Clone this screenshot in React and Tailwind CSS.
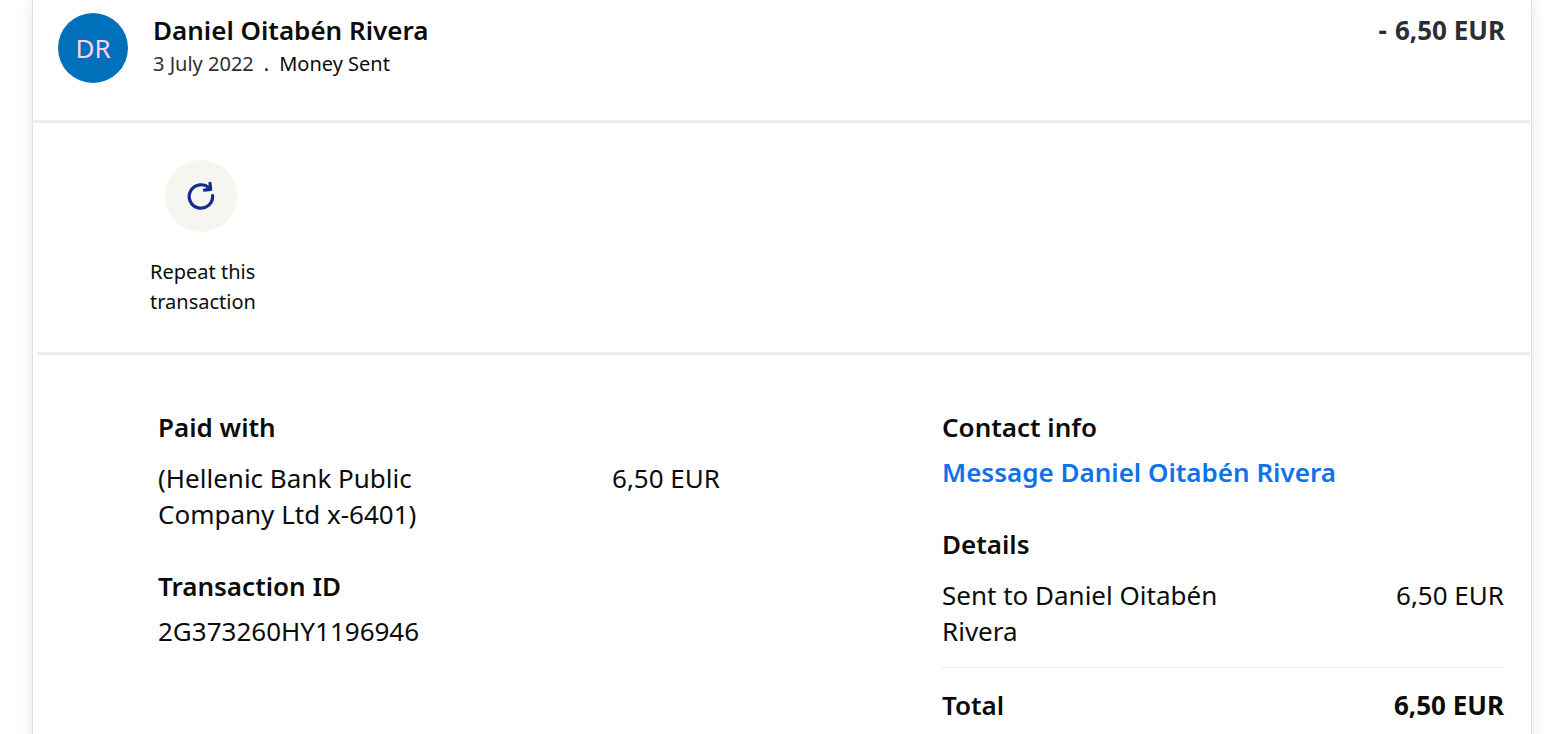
const payment = {
  name: 'Daniel Oitabén Rivera',
  initials: 'DR',
  date: '3 July 2022',
  type: 'Money Sent',
  amount: '6,50 EUR',
  source: '(Hellenic Bank Public Company Ltd x-6401)',
  id: '2G373260HY1196946',
}

function RepeatIcon() {
  return (
    <svg
      viewBox="0 0 32 32"
      className="size-8"
      fill="none"
      stroke="#142c8e"
      strokeWidth="3.2"
      strokeLinecap="round"
      strokeLinejoin="round"
      aria-hidden="true"
    >
      <path d="M27.6 15.6A11.7 11.7 0 1 1 24.6 8.6" />
      <path d="M25 3.3L25.6 9.4L19.4 10.2" />
    </svg>
  )
}

function Row({ label, amount }) {
  return (
    <div className="flex justify-between">
      <dt className="w-[282px]">{label}</dt>
      <dd>{amount}</dd>
    </div>
  )
}

export default function App() {
  return (
    <div className="min-h-screen bg-white pl-8 pr-[19px] font-['Noto_Sans',sans-serif] text-[26px] leading-9 text-[#0c0c0d]">
      <main className="min-h-screen border-x border-[#e0e0e0] bg-white shadow-[0_0_14px_rgba(0,0,0,0.1)]">
        <header className="mr-px flex gap-[25px] border-b-3 border-[#efefea] pt-3 pr-[25px] pb-[37px] pl-[25px]">
          <div className="mt-px flex size-[70px] shrink-0 items-center justify-center rounded-full bg-[#0070ba] text-[#ffd0f0]">
            {payment.initials}
          </div>
          <div className="grow">
            <h1 className="font-semibold">{payment.name}</h1>
            <p className="flex gap-[10px] text-[20px] leading-8">
              <span className="text-[#2c2e2f]">{payment.date}</span>
              <span>.</span>
              <span>{payment.type}</span>
            </p>
          </div>
          <p className="flex gap-2 font-bold text-[#2c2e2f]">
            <span>-</span>
            <span>{payment.amount}</span>
          </p>
        </header>

        <section className="mr-px ml-1 border-b-3 border-[#efefea] pt-[37px] pb-[35px] pl-[113px]">
          <button type="button" className="w-[120px] text-left text-[20px] leading-[30px]">
            <span className="mb-[25px] ml-[15px] flex size-[72px] items-center justify-center rounded-full bg-[#f6f5f0]">
              <RepeatIcon />
            </span>
            Repeat this transaction
          </button>
        </section>

        <div className="grid grid-cols-2 gap-[222px] pt-[54px] pr-[27px] pb-10 pl-[125px]">
          <div>
            <h2 className="mb-[15px] font-semibold">Paid with</h2>
            <dl>
              <Row label={payment.source} amount={payment.amount} />
            </dl>
            <h2 className="mt-9 mb-[9px] font-semibold">Transaction ID</h2>
            <p>{payment.id}</p>
          </div>

          <div>
            <h2 className="mb-[9px] font-semibold">Contact info</h2>
            <a href="#message" className="block font-semibold text-[#1072eb]">
              Message {payment.name}
            </a>
            <h2 className="mt-9 mb-[15px] font-semibold">Details</h2>
            <dl>
              <Row label={`Sent to ${payment.name}`} amount={payment.amount} />
              <div className="mt-[18px] flex justify-between border-t border-[#eaeced] pt-[19px] font-semibold">
                <dt>Total</dt>
                <dd className="font-bold">{payment.amount}</dd>
              </div>
            </dl>
          </div>
        </div>
      </main>
    </div>
  )
}
